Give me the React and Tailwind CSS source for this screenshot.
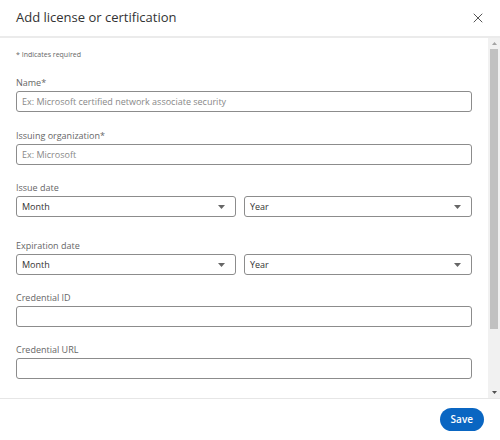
import { X } from 'lucide-react';

const Caret = () => (
    <svg width="7" height="4" viewBox="0 0 7 4" className="shrink-0">
        <path d="M0 0h7L3.5 4z" fill="#666" />
    </svg>
);

const Field = ({ label, placeholder, className = '' }) => (
    <div className={className}>
        <label className="block text-[9px] leading-[12px] text-[#666] mb-[2px]">{label}</label>
        <div className="h-[21px] border border-[#8c8c8c] rounded-[3px] px-[5px] flex items-center text-[9px] text-[#888]">
            {placeholder}
        </div>
    </div>
);

const Select = ({ value, className = '' }) => (
    <div className={`h-[21px] border border-[#8c8c8c] rounded-[3px] pl-[5px] pr-[10px] flex items-center justify-between text-[9px] text-[#333] ${className}`}>
        <span>{value}</span>
        <Caret />
    </div>
);

const App = () => {
    return (
        <div
            className="w-[500px] h-[440px] bg-white flex flex-col overflow-hidden"
            style={{ fontFamily: '"Open Sans", "Noto Sans", sans-serif' }}
        >
            {/* Header */}
            <div className="h-[38px] flex items-center justify-between pl-[16px] pr-[14px] border-b-2 border-[#ebebeb] shrink-0">
                <h2 className="text-[13px] text-[#333]">Add license or certification</h2>
                <X className="w-[16px] h-[16px] text-[#555]" strokeWidth={1.5} />
            </div>

            {/* Body */}
            <div className="flex-1 flex min-h-0">
                <div className="flex-1 pl-[16px] pr-[16px] pt-[11px]">
                    <p className="text-[7px] text-[#666] leading-[12px]">* Indicates required</p>

                    <Field className="mt-[16px]" label="Name*" placeholder="Ex: Microsoft certified network associate security" />
                    <Field className="mt-[18px]" label="Issuing organization*" placeholder="Ex: Microsoft" />

                    <div className="mt-[17px]">
                        <label className="block text-[9px] leading-[12px] text-[#666] mb-[2px]">Issue date</label>
                        <div className="flex gap-[8px]">
                            <Select className="w-[220px]" value="Month" />
                            <Select className="flex-1" value="Year" />
                        </div>
                    </div>

                    <div className="mt-[23px]">
                        <label className="block text-[9px] leading-[12px] text-[#666] mb-[2px]">Expiration date</label>
                        <div className="flex gap-[8px]">
                            <Select className="w-[220px]" value="Month" />
                            <Select className="flex-1" value="Year" />
                        </div>
                    </div>

                    <Field className="mt-[17px]" label="Credential ID" placeholder="" />
                    <Field className="mt-[17px]" label="Credential URL" placeholder="" />
                </div>

                {/* Scrollbar */}
                <div className="w-[12px] bg-[#f1f1f1] flex flex-col items-center">
                    <div className="h-[11px] flex items-center justify-center">
                        <svg width="5" height="3" viewBox="0 0 5 3"><path d="M0 3h5L2.5 0z" fill="#a3a3a3" /></svg>
                    </div>
                    <div className="w-[8px] h-[280px] bg-[#c1c1c1]" />
                    <div className="flex-1" />
                    <div className="h-[11px] flex items-center justify-center">
                        <svg width="5" height="3" viewBox="0 0 5 3"><path d="M0 0h5L2.5 3z" fill="#505050" /></svg>
                    </div>
                </div>
            </div>

            {/* Footer */}
            <div className="h-[42px] border-t border-[#e6e6e6] flex items-center justify-end pr-[16px] shrink-0">
                <button className="h-[23px] px-[11px] rounded-full bg-[#0a66c2] text-white text-[10px] font-semibold">
                    Save
                </button>
            </div>
        </div>
    );
};

export default App;
